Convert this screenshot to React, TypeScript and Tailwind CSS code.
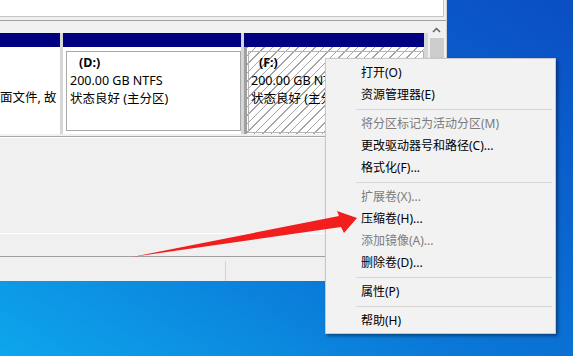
import React from "react";

const font = "font-['Noto_Sans','Noto_Sans_CJK_SC',sans-serif]";

type MenuEntry = { label?: string; disabled?: boolean; sep?: boolean };

const menuItems: MenuEntry[] = [
  { label: "打开(O)" },
  { label: "资源管理器(E)" },
  { sep: true },
  { label: "将分区标记为活动分区(M)", disabled: true },
  { label: "更改驱动器号和路径(C)..." },
  { label: "格式化(F)..." },
  { sep: true },
  { label: "扩展卷(X)...", disabled: true },
  { label: "压缩卷(H)..." },
  { label: "添加镜像(A)...", disabled: true },
  { label: "删除卷(D)..." },
  { sep: true },
  { label: "属性(P)" },
  { sep: true },
  { label: "帮助(H)" },
];

const ContextMenu = () => (
  <div className="absolute left-[325px] top-[58px] w-[231px] bg-[#f2f2f2] border border-[#c8c8c8] pt-[3px] pb-[1px] shadow-[2px_2px_3px_rgba(0,0,0,0.4)]">
    {menuItems.map((item, i) =>
      item.sep ? (
        <div key={i} className="h-[7px] pt-[3px] ml-[30px] mr-[3px]">
          <div className="h-px bg-[#d7d7d7]" />
        </div>
      ) : (
        <div
          key={i}
          className={`h-[22px] flex items-center pl-[35px] text-[12px] ${
            item.disabled ? "text-[#7c7c7c]" : "text-black"
          }`}
        >
          {item.label}
        </div>
      )
    )}
  </div>
);

const Arrow = () => (
  <svg
    className="absolute left-0 top-0 pointer-events-none"
    width="573"
    height="356"
    viewBox="0 0 573 356"
  >
    <polygon
      points="132,257 339,216 337,211 357,218 344,233 341,227"
      fill="#f21d1d"
    />
  </svg>
);

export default function App() {
  return (
    <div
      className={`relative w-[573px] h-[356px] overflow-hidden bg-[linear-gradient(to_top_right,#0ea6ec_0%,#0a78d8_40%,#0a4ec4_100%)] ${font}`}
    >
      {/* window */}
      <div className="w-[447px] h-[281px] bg-[#f0f0f0] border-r border-[#d0d0d0] flex flex-col">
        {/* volume list pane */}
        <div className="h-[17px] bg-white border-b border-r border-[#c4c4c4] mr-[2px] shrink-0" />
        <div className="h-[3px] shrink-0" />
        <div className="h-px bg-[#a0a0a0] shrink-0" />

        {/* graphical disk pane */}
        <div className="flex h-[116px] border-b border-[#a8a8a8] shrink-0">
          <div className="w-[428px] pt-[12px]">
            <div className="flex gap-[3px] h-[101px] bg-[#d6d6d6] text-[12.5px] leading-[18px] text-black">
              {/* partial partition */}
              <div className="w-[60px] flex flex-col">
                <div className="h-[14px] bg-[#000080] shrink-0" />
                <div className="flex-1 bg-white pt-[42px] overflow-hidden whitespace-nowrap">
                  面文件, 故
                </div>
              </div>
              {/* D: */}
              <div className="w-[178px] flex flex-col">
                <div className="h-[14px] bg-[#000080] shrink-0" />
                <div className="flex-1 bg-white pl-[3px] pt-[4px] pb-[3px]">
                  <div className="h-full border border-[#a8a8a8] pl-[3px] pt-[2px] whitespace-nowrap">
                    <div className="font-bold pl-[9px]">(D:)</div>
                    <div>200.00 GB NTFS</div>
                    <div>状态良好 (主分区)</div>
                  </div>
                </div>
              </div>
              {/* F: */}
              <div className="w-[180px] flex flex-col">
                <div className="h-[14px] bg-[#000080] shrink-0" />
                <div className="flex-1 border-l-[3px] border-[#a0a0a0] bg-[repeating-linear-gradient(135deg,#a4a4a4_0px,#a4a4a4_1px,#ffffff_1px,#ffffff_6px)] pl-[1px] pt-[4px] pb-[1px]">
                  <div className="h-full border border-[#b4b4b4] pl-[2px] pt-[2px] whitespace-nowrap overflow-hidden">
                    <div className="font-bold pl-[8px]">(F:)</div>
                    <div>200.00 GB NTFS</div>
                    <div>状态良好 (主分区)</div>
                  </div>
                </div>
              </div>
            </div>
          </div>
          {/* scrollbar */}
          <div className="w-[17px] flex flex-col items-center">
            <div className="h-[17px] flex items-center justify-center">
              <svg width="9" height="6" viewBox="0 0 9 6">
                <polyline points="1,5 4.5,1.5 8,5" fill="none" stroke="#606060" strokeWidth="1.5" />
              </svg>
            </div>
            <div className="w-[14px] flex-1 bg-[#cdcdcd]" />
          </div>
        </div>

        {/* lower disk pane */}
        <div className="flex-1 flex flex-col border-t border-white">
          <div className="h-[96px] border-b border-white" />
          <div className="flex-1 border-b border-[#a0a0a0]" />
        </div>

        {/* status bar */}
        <div className="h-[24px] flex shrink-0">
          <div className="w-[226px] border-r border-[#d4d4d4] mt-[4px]" />
        </div>
      </div>

      <ContextMenu />
      <Arrow />
    </div>
  );
}
